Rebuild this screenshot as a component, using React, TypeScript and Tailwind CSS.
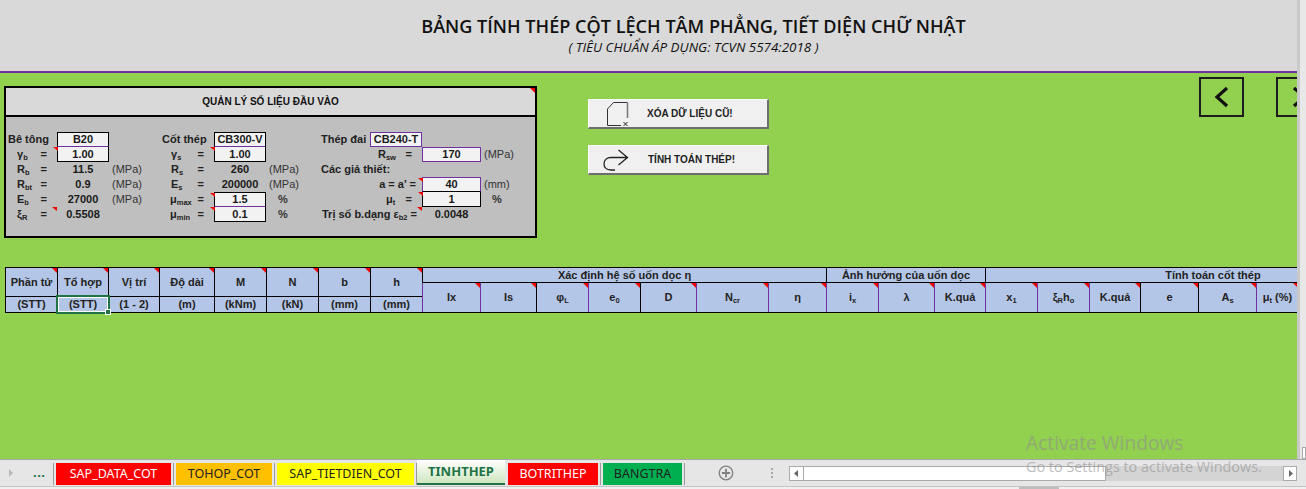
import type { ReactNode } from 'react';

const ARIAL = 'font-["Liberation_Sans",Arial,sans-serif]';

function Flag() {
  return <span className="absolute right-0 top-0 h-0 w-0 border-l-[5px] border-t-[5px] border-l-transparent border-t-[#f00000]" />;
}

function LeftFlag() {
  return <span className="absolute left-[-5px] top-0 h-0 w-0 border-l-[5px] border-t-[4px] border-l-transparent border-t-[#f00000]" />;
}

function Sub({ children }: { children: ReactNode }) {
  return <sub className="bottom-[-2px] text-[7.5px] font-bold">{children}</sub>;
}

type RowProps = {
  label: ReactNode;
  eq?: string;
  value?: string;
  unit?: string;
  box?: string;
  flag?: boolean;
  w: string;
  vw: string;
  uw: string;
  uc?: boolean;
};

// one spreadsheet row in the input panel
function Row({ label, value, unit, box, flag, eq, w, vw, uw, uc }: RowProps) {
  return (
    <div className="flex h-[15px] items-center text-[11px] leading-none">
      <div className={`flex h-full shrink-0 items-center whitespace-nowrap font-bold text-[#222] ${w}`}>
        {label}
        {eq && <span className="ml-auto pr-[10px]">{eq}</span>}
      </div>
      <div className={`relative flex h-full shrink-0 items-center justify-center font-bold text-[#1a1a1a] ${vw} ${box ?? ''}`}>
        {flag && <LeftFlag />}
        {value}
      </div>
      {unit && <div className={`whitespace-nowrap ${uw} ${uc ? 'text-center font-bold' : 'pl-[3px]'} text-[#333]`}>{unit}</div>}
    </div>
  );
}

const BOX_TOP = 'border border-black border-b-[#7030a0] bg-[#f2f2f2]';
const BOX_BOTTOM = 'border-x border-b border-black bg-[#f2f2f2]';

function Sym({ pl, children }: { pl: string; children: ReactNode }) {
  return <span className={pl}>{children}</span>;
}

function InputPanel() {
  const c1 = { w: 'w-[49px]', vw: 'w-[52px]', uw: 'w-[53px]' };
  const c2 = { w: 'w-[52px]', vw: 'w-[52px]', uw: 'w-[41px]' };
  const c3 = { w: 'w-[101px]', vw: 'w-[59px]', uw: 'w-[40px]' };
  return (
    <div className={`relative ml-[4px] mt-[13px] h-[152px] w-[533px] shrink-0 border-2 border-black bg-[#bfbfbf] ${ARIAL}`}>
      <Flag />
      <div className="flex h-[29px] items-center justify-center border-b-2 border-black bg-[#d9d9d9] text-[10px] font-bold text-[#111]">
        QUẢN LÝ SỐ LIỆU ĐẦU VÀO
      </div>
      <div className="flex pl-[2px] pt-[15px]">
        <div className="w-[154px]">
          <Row {...c1} label="Bê tông" value="B20" box={BOX_TOP} />
          <Row {...c1} label={<Sym pl="pl-[9px]">γ<Sub>b</Sub></Sym>} eq="=" value="1.00" box={BOX_BOTTOM} flag />
          <Row {...c1} label={<Sym pl="pl-[9px]">R<Sub>b</Sub></Sym>} eq="=" value="11.5" unit="(MPa)" />
          <Row {...c1} label={<Sym pl="pl-[9px]">R<Sub>bt</Sub></Sym>} eq="=" value="0.9" unit="(MPa)" />
          <Row {...c1} label={<Sym pl="pl-[9px]">E<Sub>b</Sub></Sym>} eq="=" value="27000" unit="(MPa)" />
          <Row {...c1} label={<Sym pl="pl-[9px]">ξ<Sub>R</Sub></Sym>} eq="=" value="0.5508" flag />
        </div>
        <div className="w-[159px]">
          <Row {...c2} label="Cốt thép" value="CB300-V" box={BOX_TOP} />
          <Row {...c2} label={<Sym pl="pl-[9px]">γ<Sub>s</Sub></Sym>} eq="=" value="1.00" box={BOX_BOTTOM} flag />
          <Row {...c2} label={<Sym pl="pl-[9px]">R<Sub>s</Sub></Sym>} eq="=" value="260" unit="(MPa)" />
          <Row {...c2} label={<Sym pl="pl-[9px]">E<Sub>s</Sub></Sym>} eq="=" value="200000" unit="(MPa)" />
          <Row {...c2} label={<Sym pl="pl-[8px]">μ<Sub>max</Sub></Sym>} eq="=" value="1.5" unit="%" uc uw="w-[34px]" box={BOX_TOP} flag />
          <Row {...c2} label={<Sym pl="pl-[8px]">μ<Sub>min</Sub></Sym>} eq="=" value="0.1" unit="%" uc uw="w-[34px]" box={BOX_BOTTOM} flag />
        </div>
        <div className="w-[212px]">
          <div className="flex h-[15px] items-center text-[11px] leading-none">
            <span className="w-[49px] font-bold text-[#222]">Thép đai</span>
            <span className="flex h-full w-[52px] items-center justify-center border border-[#7030a0] bg-[#f2f2f2] font-bold text-[#1a1a1a]">CB240-T</span>
          </div>
          <Row {...c3} label={<Sym pl="pl-[57px]">R<Sub>sw</Sub></Sym>} eq="=" value="170" unit="(MPa)" box="border border-[#7030a0] bg-[#f2f2f2]" />
          <Row {...c3} label="Các giả thiết:" />
          <Row {...c3} label={<span className="w-full pr-[6px] text-right">a = a' =</span>} value="40" unit="(mm)" box="border border-[#7030a0] border-b-black bg-[#f2f2f2]" flag />
          <Row {...c3} label={<Sym pl="pl-[65px]">μ<Sub>t</Sub></Sym>} eq="=" value="1" unit="%" uc uw="w-[32px]" box={BOX_BOTTOM} flag />
          <Row {...c3} label={<span className="pl-px">Trị số b.dạng ε<Sub>b2</Sub> =</span>} value="0.0048" flag />
        </div>
      </div>
    </div>
  );
}

function DocIcon() {
  return (
    <svg width="26" height="26" viewBox="0 0 26 26" fill="none" className="shrink-0">
      <path d="M1.5 8 L7.5 1.5 H21.5 M15 24.5 H1.5 V8" stroke="#333" strokeWidth="1" />
      <path d="M21.5 1.5 V17" stroke="#777" strokeWidth="1.5" />
      <path d="M17.5 21 L21.5 25 M21.5 21 L17.5 25" stroke="#222" strokeWidth="1" />
    </svg>
  );
}

function TurnIcon() {
  return (
    <svg width="26" height="22" viewBox="0 0 26 22" fill="none" className="shrink-0">
      <path d="M12 21 H8 C3 21 1 18 1 15 C1 11 4 8.5 8 8.5 H24 M15.5 1 L24.5 8.5 L15.5 16" stroke="#222" strokeWidth="1.3" />
    </svg>
  );
}

function SheetButton({ icon, text, pl, gap }: { icon: ReactNode; text: string; pl: string; gap: string }) {
  return (
    <div className={`flex h-[30px] w-[181px] items-center border-b-2 border-r-2 border-b-[#6e6e6e] border-r-[#6e6e6e] border-l border-t border-l-[#fafafa] border-t-[#fafafa] bg-[#f0f0f0] ${pl} ${gap} ${ARIAL} text-[10px] font-bold text-[#222]`}>
      {icon}
      <span>{text}</span>
    </div>
  );
}

function NavButton({ left, w }: { left?: boolean; w: string }) {
  return (
    <div className={`flex h-[40px] shrink-0 items-center justify-center border-2 border-[#1c1c1c] ${w}`}>
      <svg width="16" height="22" viewBox="0 0 16 22" fill="none">
        <path d={left ? 'M13 2 L3 11 L13 20' : 'M3 2 L13 11 L3 20'} stroke="#111" strokeWidth="3.2" />
      </svg>
    </div>
  );
}

const BLUE = 'bg-[#b4c6e7]';

type HeadCell = { label: ReactNode; purple?: boolean };

const FIXED: { top: string; bottom: string; w: string; line: string }[] = [
  { top: 'Phần tử', bottom: '(STT)', w: 'w-[52px]', line: 'border-r' },
  { top: 'Tổ hợp', bottom: '(STT)', w: 'w-[51px]', line: 'border-r' },
  { top: 'Vị trí', bottom: '(1 - 2)', w: 'w-[51px]', line: 'border-r' },
  { top: 'Độ dài', bottom: '(m)', w: 'w-[55px]', line: 'border-r' },
  { top: 'M', bottom: '(kNm)', w: 'w-[52px]', line: 'border-r' },
  { top: 'N', bottom: '(kN)', w: 'w-[52px]', line: 'border-r' },
  { top: 'b', bottom: '(mm)', w: 'w-[52px]', line: 'border-r' },
  { top: 'h', bottom: '(mm)', w: 'w-[51px]', line: '' },
];

const GROUP1: HeadCell[] = [
  { label: 'Ix', purple: true },
  { label: 'Is' },
  { label: <>φ<Sub>L</Sub></>, purple: true },
  { label: <>e<Sub>0</Sub></> },
  { label: 'D', purple: true },
  { label: <>N<Sub>cr</Sub></>, purple: true },
  { label: 'η', purple: true },
];
const GROUP2: HeadCell[] = [
  { label: <>i<Sub>x</Sub></>, purple: true },
  { label: 'λ', purple: true },
  { label: 'K.quả', purple: true },
];
const GROUP3: HeadCell[] = [
  { label: <>x<Sub>1</Sub></>, purple: true },
  { label: <>ξ<Sub>R</Sub>h<Sub>o</Sub></>, purple: true },
  { label: 'K.quả' },
  { label: 'e' },
  { label: <>A<Sub>s</Sub></>, purple: true },
  { label: <>μ<Sub>t</Sub> (%)</> },
  { label: '' },
];

function SubHead({ cell }: { cell: HeadCell }) {
  return (
    <div className={`relative flex items-center justify-center border-r ${cell.purple ? 'border-r-[#7030a0]' : 'border-r-black'} ${BLUE}`}>
      <Flag />
      <span className="whitespace-pre">{cell.label}</span>
    </div>
  );
}

function Group({ title, widths, cells, box, titleLine, gridLine }: { title: string; widths: string; cells: HeadCell[]; box: string; titleLine?: string; gridLine?: string }) {
  return (
    <div className={`flex flex-col ${box}`}>
      <div className={`flex h-[15px] items-center justify-center border-b border-b-black whitespace-nowrap ${BLUE} ${titleLine ?? ''}`}>{title}</div>
      <div className={`grid flex-1 ${widths} ${gridLine ?? ''}`}>
        {cells.map((c, i) => <SubHead key={i} cell={c} />)}
      </div>
    </div>
  );
}

function ColumnTable() {
  return (
    <div className={`ml-[5px] flex h-[46px] w-[1300px] shrink-0 border-y border-l border-black text-[11px] font-bold leading-none text-[#222] ${ARIAL}`}>
      {FIXED.map((c, i) => (
        <div key={c.top} className={`flex shrink-0 flex-col border-black ${c.line} ${BLUE} ${c.w}`}>
          <div className="relative flex h-[29px] items-center justify-center border-b border-black whitespace-nowrap">
            <Flag />
            {c.top}
          </div>
          <div className={`relative flex flex-1 items-center justify-center ${i === 1 ? 'z-10 border border-white outline-2 outline-[#217346]' : ''}`}>
            {c.bottom}
            {i === 1 && <span className="absolute bottom-[-4px] right-[-4px] h-[6px] w-[6px] border border-white bg-[#217346]" />}
          </div>
        </div>
      ))}
      <Group
        title="Xác định hệ số uốn dọc η"
        widths="grid-cols-[58px_56px_52px_52px_56px_72px_58px]"
        cells={GROUP1}
        box="w-[405px] shrink-0"
        titleLine="border-x border-x-black"
        gridLine="border-l border-l-[#7030a0]"
      />
      <Group
        title="Ảnh hưởng của uốn dọc"
        widths="grid-cols-[52px_56px_51px]"
        cells={GROUP2}
        box="w-[159px] shrink-0"
        titleLine="border-r border-r-black"
      />
      <Group
        title="Tính toán cốt thép"
        widths="grid-cols-[52px_52px_51px_58px_58px_42px_141px]"
        cells={GROUP3}
        box="w-[454px] shrink-0"
      />
    </div>
  );
}

const TABS = [
  { name: 'SAP_DATA_COT', w: 'w-[115px]', cls: 'bg-[#ff0000] text-white' },
  { name: 'TOHOP_COT', w: 'w-[96px]', cls: 'bg-[#ffc000] text-[#222]' },
  { name: 'SAP_TIETDIEN_COT', w: 'w-[137px]', cls: 'bg-[#ffff00] text-[#222]' },
];

function Sep() {
  return <span className="mx-[2px] h-[22px] w-px shrink-0 bg-[#9a9a9a]" />;
}

function SheetBar() {
  return (
    <div className="flex h-[27px] items-start border-t border-[#a8a8a8] bg-[#e6e6e6] font-['Noto_Sans','Open_Sans',sans-serif] text-[12.5px] leading-none">
      <div className="flex h-[25px] w-[51px] shrink-0 items-center">
        <svg width="6" height="8" viewBox="0 0 6 8" className="ml-[8px]"><path d="M1 0 L5 4 L1 8 Z" fill="#b8b8b8" /></svg>
        <span className="ml-[19px] text-[13px] font-bold tracking-[0.5px] text-[#217346]">...</span>
      </div>
      <div className="flex h-[25px] items-end">
        <Sep />
        {TABS.map(t => (
          <div key={t.name} className="flex items-end">
            <div className={`flex h-[22px] items-center justify-center ${t.w} ${t.cls}`}>{t.name}</div>
            <Sep />
          </div>
        ))}
      </div>
      <div className="ml-[-2px] flex h-[25px] w-[88px] shrink-0 items-center justify-center border-b-2 border-[#217346] bg-gradient-to-b from-white to-[#cfe6bf] text-[13px] font-bold text-[#217346]">
        TINHTHEP
      </div>
      <div className="flex h-[25px] items-end pl-[3px]">
        <div className="flex h-[22px] w-[90px] items-center justify-center bg-[#ff0000] text-white">BOTRITHEP</div>
        <Sep />
        <div className="flex h-[22px] w-[79px] items-center justify-center bg-[#00b050] text-[#222]">BANGTRA</div>
        <Sep />
      </div>
      <svg width="16" height="16" viewBox="0 0 16 16" fill="none" className="ml-[31px] mt-[5px] shrink-0">
        <circle cx="8" cy="8" r="6.8" stroke="#808080" strokeWidth="1.3" />
        <path d="M8 3.8 V12.2 M3.8 8 H12.2" stroke="#808080" strokeWidth="1.8" />
      </svg>
      <div className="ml-[37px] mt-[8px] flex shrink-0 flex-col gap-[2px]">
        <span className="h-[2px] w-[2px] bg-[#a6a6a6]" />
        <span className="h-[2px] w-[2px] bg-[#a6a6a6]" />
        <span className="h-[2px] w-[2px] bg-[#a6a6a6]" />
      </div>
      <div className="ml-[16px] mt-[6px] flex h-[15px] w-[508px] shrink-0 bg-[#d4d4d4]">
        <div className="flex w-[15px] items-center justify-center border border-[#ababab] bg-white">
          <svg width="5" height="7" viewBox="0 0 5 7"><path d="M4 0 L0 3.5 L4 7 Z" fill="#666" /></svg>
        </div>
        <div className="w-[302px] border-y border-r border-[#ababab] bg-white" />
        <div className="flex-1" />
        <div className="flex w-[14px] items-center justify-center border border-[#ababab] bg-white">
          <svg width="5" height="7" viewBox="0 0 5 7"><path d="M1 0 L5 3.5 L1 7 Z" fill="#666" /></svg>
        </div>
      </div>
    </div>
  );
}

export default function App() {
  return (
    <div className="relative h-[489px] w-[1306px] overflow-hidden bg-[#e6e6e6]">
      <div className="flex h-[459px]">
        <div className="flex w-[1297px] shrink-0 flex-col overflow-hidden bg-[#92d050]">
          <div className="flex h-[73px] shrink-0 flex-col items-center border-b-2 border-[#7030a0] bg-[#d9d9d9] pt-[14px] pl-[90px] font-['Open_Sans','Noto_Sans',sans-serif] leading-none text-[#111]">
            <div className="whitespace-nowrap text-[18.1px] font-semibold leading-[24px]">BẢNG TÍNH THÉP CỘT LỆCH TÂM PHẲNG, TIẾT DIỆN CHỮ NHẬT</div>
            <div className="mt-[1px] whitespace-nowrap text-[13.4px] font-medium italic leading-[16px]">( TIÊU CHUẨN ÁP DỤNG: TCVN 5574:2018 )</div>
          </div>
          <div className="flex h-[194px] shrink-0 items-start">
            <InputPanel />
            <div className="ml-[51px] mt-[26px] flex shrink-0 flex-col gap-[16px]">
              <SheetButton icon={<DocIcon />} text="XÓA DỮ LIỆU CŨ!" pl="pl-[17px]" gap="gap-[15px]" />
              <SheetButton icon={<TurnIcon />} text="TÍNH TOÁN THÉP!" pl="pl-[14px]" gap="gap-[19px]" />
            </div>
            <div className="ml-[430px] mt-[4px] flex shrink-0 gap-[32px]">
              <NavButton left w="w-[45px]" />
              <NavButton w="w-[45px]" />
            </div>
          </div>
          <ColumnTable />
        </div>
        <div className="flex w-[9px] flex-col justify-end border-l-[3px] border-l-[#c9c9c9] bg-[#e8e8e8]">
          <div className="ml-[2px] h-[12px] border border-[#ababab] bg-white" />
        </div>
      </div>
      <SheetBar />
      <div className="h-[3px] border-t border-[#c4c4c4] bg-[#f0f0f0]">
        <div className="ml-[1019px] h-full w-[40px] bg-[#bdbdbd]" />
      </div>
      {/* windows activation watermark sits over the sheet */}
      <div className="pointer-events-none absolute left-[1026px] top-[431px] font-['Open_Sans','Noto_Sans',sans-serif] text-[#8f8f8f]/60">
        <div className="text-[19.2px] leading-[24px]">Activate Windows</div>
        <div className="mt-[3px] whitespace-nowrap text-[14.4px] leading-[18px]">Go to Settings to activate Windows.</div>
      </div>
    </div>
  );
}
